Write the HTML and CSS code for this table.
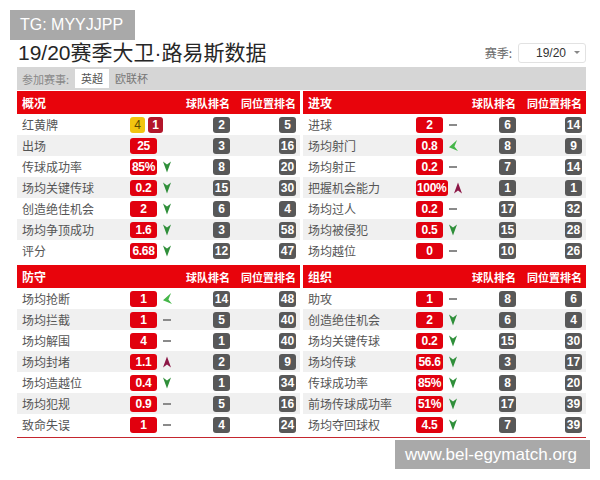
FILE: index.html
```html
<!DOCTYPE html>
<html lang="zh">
<head>
<meta charset="utf-8">
<title>19/20赛季大卫·路易斯数据</title>
<link rel="stylesheet" href="styles.css">
</head>
<body>
<div class="page">
  <div class="head">
    <h1 class="title">19/20赛季大卫·路易斯数据</h1>
    <div class="season">
      <span>赛季:</span>
      <div class="select"><span>19/20</span><i class="caret"></i></div>
    </div>
  </div>
  <div class="board">
    <div class="tabs">
      <span class="tabs-label">参加赛事:</span>
      <span class="tab active">英超</span>
      <span class="tab">欧联杯</span>
    </div>
    <div class="grid">
      <section class="sec">
        <div class="row hd"><span class="lbl">概况</span><span></span><span class="c">球队排名</span><span class="c">同位置排名</span></div>
        <div class="row"><span class="lbl">红黄牌</span><span class="val"><b class="card yellow">4</b><b class="card red">1</b></span><span class="rk"><b>2</b></span><span class="rk"><b>5</b></span></div>
        <div class="row"><span class="lbl">出场</span><span class="val"><b class="num">25</b></span><span class="rk"><b>3</b></span><span class="rk"><b>16</b></span></div>
        <div class="row"><span class="lbl">传球成功率</span><span class="val"><b class="num">85%</b><svg class="ar down" viewBox="0 0 10 14"><path d="M0 0L5 4L10 0L5 14Z"/></svg></span><span class="rk"><b>8</b></span><span class="rk"><b>20</b></span></div>
        <div class="row"><span class="lbl">场均关键传球</span><span class="val"><b class="num">0.2</b><svg class="ar down" viewBox="0 0 10 14"><path d="M0 0L5 4L10 0L5 14Z"/></svg></span><span class="rk"><b>15</b></span><span class="rk"><b>30</b></span></div>
        <div class="row"><span class="lbl">创造绝佳机会</span><span class="val"><b class="num">2</b><svg class="ar down" viewBox="0 0 10 14"><path d="M0 0L5 4L10 0L5 14Z"/></svg></span><span class="rk"><b>6</b></span><span class="rk"><b>4</b></span></div>
        <div class="row"><span class="lbl">场均争顶成功</span><span class="val"><b class="num">1.6</b><svg class="ar down" viewBox="0 0 10 14"><path d="M0 0L5 4L10 0L5 14Z"/></svg></span><span class="rk"><b>3</b></span><span class="rk"><b>58</b></span></div>
        <div class="row"><span class="lbl">评分</span><span class="val"><b class="num">6.68</b><svg class="ar down" viewBox="0 0 10 14"><path d="M0 0L5 4L10 0L5 14Z"/></svg></span><span class="rk"><b>12</b></span><span class="rk"><b>47</b></span></div>
      </section>
      <section class="sec">
        <div class="row hd"><span class="lbl">进攻</span><span></span><span class="c">球队排名</span><span class="c">同位置排名</span></div>
        <div class="row"><span class="lbl">进球</span><span class="val"><b class="num">2</b><i class="dash"></i></span><span class="rk"><b>6</b></span><span class="rk"><b>14</b></span></div>
        <div class="row"><span class="lbl">场均射门</span><span class="val"><b class="num">0.8</b><svg class="ar left" viewBox="0 0 10 12"><path d="M0 8L9 0L6 7L10 12Z"/></svg></span><span class="rk"><b>8</b></span><span class="rk"><b>9</b></span></div>
        <div class="row"><span class="lbl">场均射正</span><span class="val"><b class="num">0.2</b><i class="dash"></i></span><span class="rk"><b>7</b></span><span class="rk"><b>14</b></span></div>
        <div class="row"><span class="lbl">把握机会能力</span><span class="val"><b class="num">100%</b><svg class="ar up" viewBox="0 0 10 14"><path d="M0 14L5 10L10 14L5 0Z"/></svg></span><span class="rk"><b>1</b></span><span class="rk"><b>1</b></span></div>
        <div class="row"><span class="lbl">场均过人</span><span class="val"><b class="num">0.2</b><i class="dash"></i></span><span class="rk"><b>17</b></span><span class="rk"><b>32</b></span></div>
        <div class="row"><span class="lbl">场均被侵犯</span><span class="val"><b class="num">0.5</b><svg class="ar down" viewBox="0 0 10 14"><path d="M0 0L5 4L10 0L5 14Z"/></svg></span><span class="rk"><b>15</b></span><span class="rk"><b>28</b></span></div>
        <div class="row"><span class="lbl">场均越位</span><span class="val"><b class="num">0</b><i class="dash"></i></span><span class="rk"><b>10</b></span><span class="rk"><b>26</b></span></div>
      </section>
      <section class="sec">
        <div class="row hd"><span class="lbl">防守</span><span></span><span class="c">球队排名</span><span class="c">同位置排名</span></div>
        <div class="row"><span class="lbl">场均抢断</span><span class="val"><b class="num">1</b><svg class="ar left" viewBox="0 0 10 12"><path d="M0 8L9 0L6 7L10 12Z"/></svg></span><span class="rk"><b>14</b></span><span class="rk"><b>48</b></span></div>
        <div class="row"><span class="lbl">场均拦截</span><span class="val"><b class="num">1</b><i class="dash"></i></span><span class="rk"><b>5</b></span><span class="rk"><b>40</b></span></div>
        <div class="row"><span class="lbl">场均解围</span><span class="val"><b class="num">4</b><i class="dash"></i></span><span class="rk"><b>1</b></span><span class="rk"><b>40</b></span></div>
        <div class="row"><span class="lbl">场均封堵</span><span class="val"><b class="num">1.1</b><svg class="ar up" viewBox="0 0 10 14"><path d="M0 14L5 10L10 14L5 0Z"/></svg></span><span class="rk"><b>2</b></span><span class="rk"><b>9</b></span></div>
        <div class="row"><span class="lbl">场均造越位</span><span class="val"><b class="num">0.4</b><svg class="ar down" viewBox="0 0 10 14"><path d="M0 0L5 4L10 0L5 14Z"/></svg></span><span class="rk"><b>1</b></span><span class="rk"><b>34</b></span></div>
        <div class="row"><span class="lbl">场均犯规</span><span class="val"><b class="num">0.9</b><i class="dash"></i></span><span class="rk"><b>5</b></span><span class="rk"><b>16</b></span></div>
        <div class="row"><span class="lbl">致命失误</span><span class="val"><b class="num">1</b><i class="dash"></i></span><span class="rk"><b>4</b></span><span class="rk"><b>24</b></span></div>
      </section>
      <section class="sec">
        <div class="row hd"><span class="lbl">组织</span><span></span><span class="c">球队排名</span><span class="c">同位置排名</span></div>
        <div class="row"><span class="lbl">助攻</span><span class="val"><b class="num">1</b><i class="dash"></i></span><span class="rk"><b>8</b></span><span class="rk"><b>6</b></span></div>
        <div class="row"><span class="lbl">创造绝佳机会</span><span class="val"><b class="num">2</b><svg class="ar down" viewBox="0 0 10 14"><path d="M0 0L5 4L10 0L5 14Z"/></svg></span><span class="rk"><b>6</b></span><span class="rk"><b>4</b></span></div>
        <div class="row"><span class="lbl">场均关键传球</span><span class="val"><b class="num">0.2</b><svg class="ar down" viewBox="0 0 10 14"><path d="M0 0L5 4L10 0L5 14Z"/></svg></span><span class="rk"><b>15</b></span><span class="rk"><b>30</b></span></div>
        <div class="row"><span class="lbl">场均传球</span><span class="val"><b class="num">56.6</b><svg class="ar down" viewBox="0 0 10 14"><path d="M0 0L5 4L10 0L5 14Z"/></svg></span><span class="rk"><b>3</b></span><span class="rk"><b>17</b></span></div>
        <div class="row"><span class="lbl">传球成功率</span><span class="val"><b class="num">85%</b><svg class="ar down" viewBox="0 0 10 14"><path d="M0 0L5 4L10 0L5 14Z"/></svg></span><span class="rk"><b>8</b></span><span class="rk"><b>20</b></span></div>
        <div class="row"><span class="lbl">前场传球成功率</span><span class="val"><b class="num">51%</b><svg class="ar down" viewBox="0 0 10 14"><path d="M0 0L5 4L10 0L5 14Z"/></svg></span><span class="rk"><b>17</b></span><span class="rk"><b>39</b></span></div>
        <div class="row"><span class="lbl">场均夺回球权</span><span class="val"><b class="num">4.5</b><svg class="ar down" viewBox="0 0 10 14"><path d="M0 0L5 4L10 0L5 14Z"/></svg></span><span class="rk"><b>7</b></span><span class="rk"><b>39</b></span></div>
      </section>
    </div>
  </div>
</div>
<div class="wm wm-tg">TG: MYYJJPP</div>
<div class="wm wm-url">www.bel-egymatch.org</div>
</body>
</html>
```
FILE: styles.css
```css
html, body {
  margin: 0;
  padding: 0;
  background: #fff;
}
body {
  width: 600px;
  height: 480px;
  overflow: hidden;
  position: relative;
  font-family: "Noto Sans CJK SC", "Liberation Sans", sans-serif;
  color: #333;
}
.page {
  width: 569px;
  padding-left: 17px;
}
.head {
  margin-top: 38px;
  height: 29px;
  display: flex;
  align-items: center;
  justify-content: space-between;
}
.title {
  margin: 0;
  padding-left: 1px;
  font-family: "Liberation Sans", "Noto Sans CJK SC", sans-serif;
  font-size: 21px;
  font-weight: 400;
  line-height: 29px;
  color: #262626;
}
.season {
  display: flex;
  align-items: center;
  gap: 6px;
  font-size: 12px;
  color: #666;
}
.select {
  width: 68px;
  height: 20px;
  box-sizing: border-box;
  border: 1px solid #e2e2e2;
  border-radius: 3px;
  display: flex;
  align-items: center;
  padding: 0 5px 0 17px;
  font-family: "Liberation Sans", sans-serif;
  font-size: 12px;
  color: #333;
}
.caret {
  margin-left: auto;
  width: 0;
  height: 0;
  border-left: 3px solid transparent;
  border-right: 3px solid transparent;
  border-top: 3px solid #888;
}
.board {
  border-bottom: 1px solid #c4262e;
  padding-bottom: 2px;
}
.tabs {
  height: 23px;
  background: #d6d6d6;
  display: flex;
  align-items: center;
  padding-left: 5px;
  font-size: 11px;
  color: #888;
}
.tabs-label {
  margin-right: 6px;
}
.tab {
  height: 19px;
  line-height: 19px;
  padding: 0 6px;
  color: #777;
}
.tab.active {
  background: #fff;
  color: #555;
}
.grid {
  display: grid;
  grid-template-columns: 283px 283px;
  column-gap: 3px;
  row-gap: 4px;
  margin-top: 1px;
}
.row {
  display: grid;
  grid-template-columns: 113px 60px 40px 66px;
  height: 21px;
  align-items: center;
  padding-right: 4px;
}
.row:nth-child(odd) {
  background: #f0f0f0;
}
.row.hd {
  height: 23px;
  background: #e8040c;
  color: #fff;
  font-weight: 700;
  font-size: 11px;
}
.row.hd .c {
  justify-self: end;
  white-space: nowrap;
}
.lbl {
  padding-left: 5px;
  font-size: 12px;
  color: #555;
  white-space: nowrap;
}
.row.hd .lbl {
  color: #fff;
  font-size: 12px;
}
.val {
  display: flex;
  align-items: center;
  gap: 6px;
}
.num, .card, .rk b {
  height: 16px;
  line-height: 16px;
  border-radius: 3px;
  color: #fff;
  font-family: "Liberation Sans", sans-serif;
  font-weight: 700;
  font-size: 12px;
  text-align: center;
  box-sizing: border-box;
}
.num {
  min-width: 27px;
  padding: 0 1px;
  background: #e1000e;
  letter-spacing: -0.3px;
}
.card {
  width: 15px;
  margin-right: -3px;
}
.card.yellow {
  background: #f1c40f;
  color: #5a4a00;
  font-weight: 400;
}
.card.red {
  background: #b3162a;
}
.rk {
  display: flex;
  justify-content: flex-end;
}
.rk b {
  min-width: 17px;
  padding: 0 1px;
  background: #585858;
}
.ar {
  width: 8px;
  height: 12px;
  display: block;
}
.ar.down { fill: #2f8f3a; }
.ar.up { fill: #8c1746; }
.ar.left {
  width: 9px;
  height: 11px;
  fill: #45b649;
}
.dash {
  display: block;
  width: 8px;
  height: 2px;
  background: #8a8a8a;
}
.wm {
  position: absolute;
  background: #a9a9a9;
  color: #fff;
  font-family: "Liberation Sans", sans-serif;
  display: flex;
  align-items: center;
}
.wm-tg {
  left: 10px;
  top: 10px;
  width: 125px;
  height: 30px;
  box-sizing: border-box;
  padding-left: 10px;
  font-size: 16px;
}
.wm-url {
  left: 395px;
  top: 440px;
  width: 195px;
  height: 29px;
  box-sizing: border-box;
  padding-left: 10px;
  font-size: 17px;
}
```
